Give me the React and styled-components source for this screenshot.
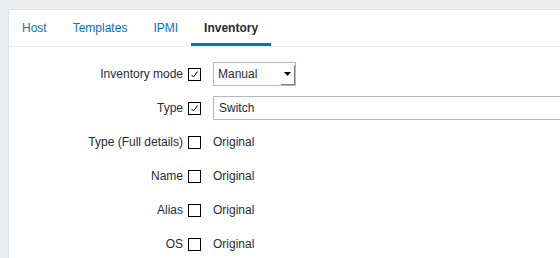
import React from "react";
import styled, { createGlobalStyle } from "styled-components";

const Global = createGlobalStyle`
  html, body { margin: 0; padding: 0; background: #ebeef0; }
  body { font-family: "Liberation Sans", Arial, sans-serif; font-size: 12px; color: #1f2c33; }
`;

const Page = styled.div`
  padding: 9px 0 0 8px;
  height: 258px;
  box-sizing: border-box;
  overflow: hidden;
`;

const Panel = styled.div`
  background: #fff;
  border-top: 1px solid #dfe4e7;
  border-left: 1px solid #dfe4e7;
  height: 100%;
`;

const TabBar = styled.div`
  display: flex;
  height: 36px;
  border-bottom: 1px solid #ebeef0;
`;

const Tab = styled.div`
  display: flex;
  align-items: center;
  padding: 0 13px;
  height: 36px;
  box-sizing: border-box;
  font-size: 12px;
  color: ${(p) => (p.$active ? "#1f2c33" : "#0275b8")};
  font-weight: ${(p) => (p.$active ? "bold" : "normal")};
  border-bottom: 3px solid ${(p) => (p.$active ? "#0275b8" : "transparent")};
  padding-top: 3px;
`;

const Form = styled.div`
  display: grid;
  grid-template-columns: 179px 13px 1fr;
  row-gap: 10px;
  padding-top: 15px;
`;

const Label = styled.div`
  display: flex;
  align-items: center;
  justify-content: flex-end;
  height: 24px;
  padding-right: 5px;
  white-space: nowrap;
`;

const CheckCell = styled.div`
  display: flex;
  align-items: center;
  height: 24px;
`;

const Box = styled.div`
  width: 13px;
  height: 13px;
  box-sizing: border-box;
  border: 1px solid #000;
  background: #fff;
  display: flex;
  align-items: center;
  justify-content: center;
`;

const Value = styled.div`
  display: flex;
  align-items: center;
  height: 24px;
  padding-left: 12px;
  min-width: 0;
`;

const Select = styled.div`
  width: 83px;
  height: 24px;
  box-sizing: border-box;
  border: 1px solid #acbbc2;
  display: flex;
  align-items: center;
  justify-content: space-between;
  padding-left: 4px;
  font-size: 12px;
`;

const Arrow = styled.div`
  width: 14px;
  height: 20px;
  margin-right: 1px;
  background: #fff;
  box-shadow: 1px 1px 0 #7e7e7e, 2px 2px 0 #b9b9b9;
  display: flex;
  align-items: center;
  justify-content: center;
  margin-top: -1px;
`;

const Input = styled.div`
  height: 24px;
  box-sizing: border-box;
  border: 1px solid #acbbc2;
  border-right: none;
  flex: 1;
  display: flex;
  align-items: center;
  padding-left: 5px;
`;

const Check = ({ on }) => (
  <Box>
    {on && (
      <svg width="9" height="9" viewBox="0 0 9 9">
        <path d="M1.5 5 L3.5 7 L7.5 1.5" fill="none" stroke="#000" strokeWidth="1" />
      </svg>
    )}
  </Box>
);

const rows = [
  { label: "Type (Full details)" },
  { label: "Name" },
  { label: "Alias" },
  { label: "OS" },
];

export default function App() {
  return (
    <>
      <Global />
      <Page>
        <Panel>
          <TabBar>
            <Tab>Host</Tab>
            <Tab>Templates</Tab>
            <Tab>IPMI</Tab>
            <Tab $active>Inventory</Tab>
          </TabBar>
          <Form>
            <Label>Inventory mode</Label>
            <CheckCell><Check on /></CheckCell>
            <Value>
              <Select>
                Manual
                <Arrow>
                  <svg width="7" height="4" viewBox="0 0 7 4">
                    <path d="M0 0 H7 L3.5 4 Z" fill="#000" />
                  </svg>
                </Arrow>
              </Select>
            </Value>

            <Label>Type</Label>
            <CheckCell><Check on /></CheckCell>
            <Value>
              <Input>Switch</Input>
            </Value>

            {rows.map((r) => (
              <React.Fragment key={r.label}>
                <Label>{r.label}</Label>
                <CheckCell><Check /></CheckCell>
                <Value>Original</Value>
              </React.Fragment>
            ))}
          </Form>
        </Panel>
      </Page>
    </>
  );
}
